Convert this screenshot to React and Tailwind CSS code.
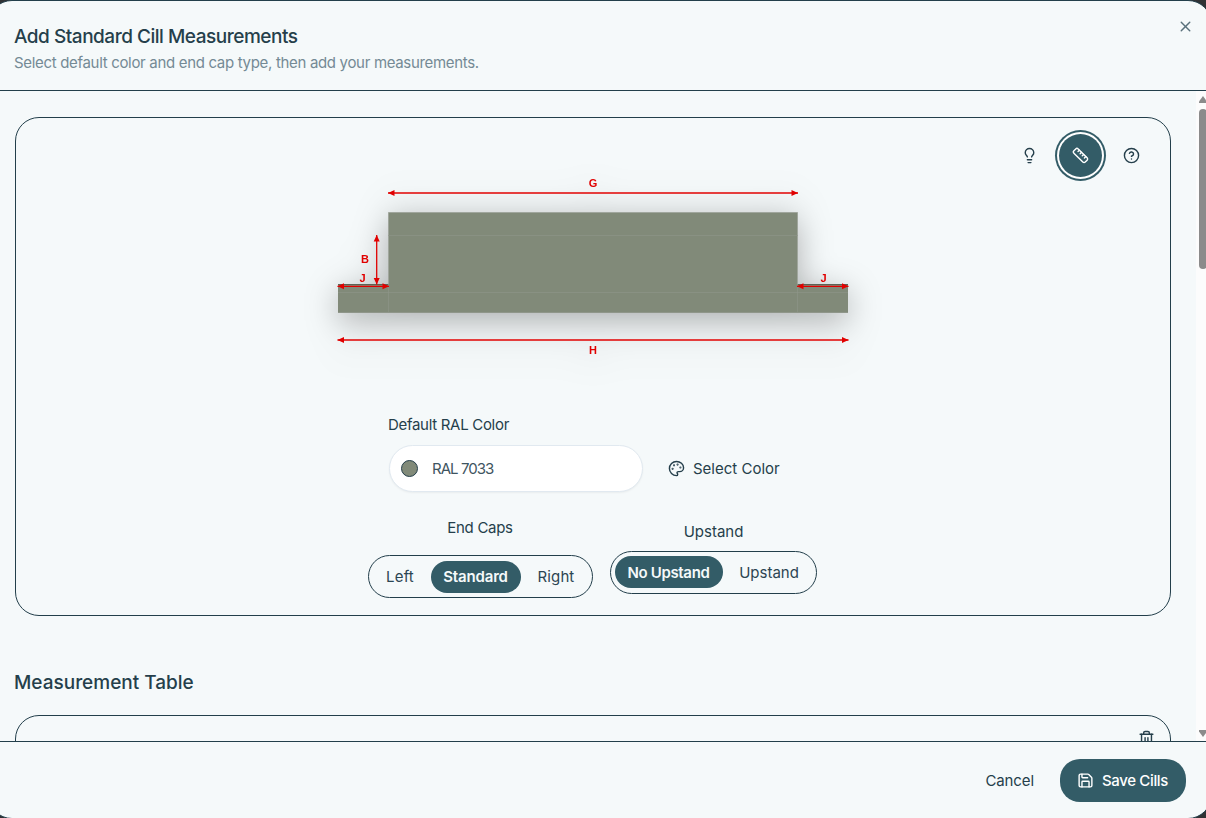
import { useState } from "react";
import { CircleQuestionMark, Lightbulb, Ruler, Save, Trash2, X } from "lucide-react";

const RAL_HEX = "#818a79";

function PaletteIcon({ className }) {
  return (
    <svg
      width="17"
      height="17"
      viewBox="0 0 24 24"
      fill="none"
      stroke="currentColor"
      strokeWidth="2"
      strokeLinecap="round"
      strokeLinejoin="round"
      className={className}
    >
      <circle cx="13.5" cy="6.5" r=".5" fill="currentColor" />
      <circle cx="17.5" cy="10.5" r=".5" fill="currentColor" />
      <circle cx="8.5" cy="7.5" r=".5" fill="currentColor" />
      <circle cx="6.5" cy="12.5" r=".5" fill="currentColor" />
      <path d="M12 2C6.5 2 2 6.5 2 12s4.5 10 10 10c.926 0 1.648-.746 1.648-1.688 0-.437-.18-.835-.437-1.125-.29-.289-.438-.652-.438-1.125a1.64 1.64 0 0 1 1.668-1.668h1.996c3.051 0 5.555-2.503 5.555-5.554C21.965 6.012 17.461 2 12 2z" />
    </svg>
  );
}

// Arrow with a head on both ends, horizontal or vertical
function Dimension({ x1, y1, x2, y2, width = 1.3 }) {
  const vertical = x1 === x2;
  const heads = vertical
    ? `M${x1} ${y1}l-3 6.5h6zM${x2} ${y2}l-3 -6.5h6z`
    : `M${x1} ${y1}l6.5 -3v6zM${x2} ${y2}l-6.5 -3v6z`;

  return (
    <g>
      <line x1={x1} y1={y1} x2={x2} y2={y2} stroke="#e00000" strokeWidth={width} />
      <path d={heads} fill="#e00000" />
    </g>
  );
}

function CillDiagram() {
  return (
    <svg
      width="510"
      height="184"
      viewBox="0 0 510 184"
      className="mx-auto block overflow-visible drop-shadow-[0_8px_16px_rgba(0,0,0,0.3)]"
    >
      <path d="M50.5 35.5H459.5V107H510V136H0V107H50.5Z" fill={RAL_HEX} />
      <g stroke="#8f968a" strokeWidth="1" fill="none">
        <path d="M50.5 107V35.5H459.5V107" stroke="#a0a69d" />
        <path d="M50 58.5H460M0 115.5H510M50.5 107V136M459.5 107V136" strokeOpacity="0.6" />
        <path d="M0 135.5H510" />
      </g>
      <path d="M0 107.5H50M460 107.5H510" stroke="#5c6356" />
      <Dimension x1={50} y1={16} x2={460} y2={16} />
      <Dimension x1={-0.5} y1={163} x2={510.5} y2={163} />
      <Dimension x1={-0.5} y1={109.3} x2={51} y2={109.3} />
      <Dimension x1={459} y1={109.3} x2={510.5} y2={109.3} />
      <Dimension x1={38.7} y1={58} x2={38.7} y2={107.5} />
      <g
        fill="#e00000"
        textAnchor="middle"
        className="font-['Liberation_Sans',sans-serif] text-[11px] font-bold"
      >
        <text x="255" y="10">G</text>
        <text x="27" y="86">B</text>
        <text x="24.5" y="105">J</text>
        <text x="485.5" y="105">J</text>
        <text x="255" y="177">H</text>
      </g>
    </svg>
  );
}

function Segmented({ options, value, onChange, className }) {
  return (
    <div
      className={`flex h-[43px] rounded-full border border-[#233f4b] ${className}`}
    >
      {options.map((option) => (
        <button
          key={option.label}
          onClick={() => onChange(option.label)}
          className={`h-8 rounded-full text-[15px] whitespace-nowrap ${option.className} ${
            value === option.label
              ? "bg-[#335c67] font-semibold text-[#f5f9fa]"
              : "text-[#2c4552]"
          }`}
        >
          {option.label}
        </button>
      ))}
    </div>
  );
}

const endCapOptions = [
  { label: "Left", className: "w-[62px] pt-px pl-px tracking-[0.15px]" },
  { label: "Standard", className: "w-[90px] pt-px tracking-[-0.15px]" },
  { label: "Right", className: "w-[70px] pt-px pl-px tracking-[0.1px]" },
];

const upstandOptions = [
  { label: "No Upstand", className: "w-[108px] pt-[2px] tracking-[-0.35px]" },
  { label: "Upstand", className: "w-[92px] pt-[2px] pl-px tracking-[0px]" },
];

export default function App() {
  const [endCap, setEndCap] = useState("Standard");
  const [upstand, setUpstand] = useState("No Upstand");

  return (
    <div className="h-[818px] w-full overflow-hidden bg-[#303234] font-['Inter',sans-serif] text-[#253f4b]">
      <div className="-ml-3 flex h-[819px] w-[1224px] flex-col overflow-hidden rounded-3xl border border-[#233f4b] bg-[#f5f9fa]">
        <header className="flex h-[90px] shrink-0 items-start justify-between border-b border-[#233f4b] pr-[17px] pl-[25px]">
          <div className="pt-[23px]">
            <h2 className="text-[19px] leading-[26px] font-medium tracking-[-0.48px]">
              Add Standard Cill Measurements
            </h2>
            <p className="text-[15px] leading-[26px] tracking-[-0.32px] text-[#748a95]">
              Select default color and end cap type, then add your measurements.
            </p>
          </div>
          <button className="mt-[17px] text-[#59707b]">
            <X size={17} strokeWidth={2} />
          </button>
        </header>

        <div className="flex min-h-0 flex-1">
          <main className="flex w-[1207px] shrink-0 flex-col overflow-hidden pt-[26px] pr-[25px] pl-[26px]">
            <section className="h-[499px] shrink-0 rounded-3xl border border-[#233f4b]">
              <div className="flex justify-end gap-2 pt-4 pr-[17px]">
                <button className="flex size-[43px] items-center justify-center">
                  <Lightbulb size={17} />
                </button>
                <button className="flex size-[43px] items-center justify-center rounded-full bg-[#335c67] text-white ring-2 ring-[#335c67] ring-offset-2 ring-offset-white">
                  <Ruler size={17} />
                </button>
                <button className="flex size-[43px] items-center justify-center">
                  <CircleQuestionMark size={17} />
                </button>
              </div>

              <CillDiagram />

              <div className="mx-auto mt-[52px] w-[410px]">
                <p className="text-[15px] leading-6 tracking-[-0.3px]">Default RAL Color</p>
                <div className="mt-2 flex items-center">
                  <div className="ml-[1px] flex h-[47px] w-[254px] items-center rounded-full border border-[#e1e9f0] bg-white pl-[11px] shadow-xs">
                    <span
                      className="size-[17px] rounded-full border border-[#253f4b]"
                      style={{ backgroundColor: RAL_HEX }}
                    />
                    <span className="ml-[14px] pt-px text-[15px] tracking-[-0.95px] text-[#3f5561]">
                      RAL 7033
                    </span>
                  </div>
                  <button className="ml-[25px] flex items-center gap-2 text-[15px] whitespace-nowrap">
                    <PaletteIcon className="-mt-px" />
                    <span className="pt-px tracking-[0px]">Select Color</span>
                  </button>
                </div>
              </div>

              <div className="mt-6 flex items-center justify-center gap-[17px] pr-[2px]">
                <div className="text-center">
                  <p className="mb-[15px] text-[15px] leading-6 tracking-[-0.3px]">End Caps</p>
                  <Segmented
                    options={endCapOptions}
                    value={endCap}
                    onChange={setEndCap}
                    className="w-[225px] pt-[5px]"
                  />
                </div>
                <div className="text-center">
                  <p className="mb-[7px] pl-px text-[15px] leading-6">Upstand</p>
                  <Segmented
                    options={upstandOptions}
                    value={upstand}
                    onChange={setUpstand}
                    className="w-[207px] pt-1 pl-1"
                  />
                </div>
              </div>
            </section>

            <h3 className="mt-[53px] -ml-px shrink-0 text-[19px] leading-7 font-medium">
              Measurement Table
            </h3>
            <section className="mt-[18px] flex h-[120px] shrink-0 justify-end rounded-3xl border border-[#233f4b] pt-[14px] pr-[15px]">
              <Trash2 size={17} />
            </section>
          </main>

          {/* scrollbar */}
          <div className="flex w-[15px] shrink-0 flex-col items-center bg-[#fcfcfc] pt-[5px] pb-1 pr-[1px]">
            <svg width="8" height="7" viewBox="0 0 8 7" fill="#8b8b8b">
              <path d="M4 0L8 5.5V7H0V5.5Z" />
            </svg>
            <div className="mt-[6px] h-[160px] w-2 rounded-full bg-[#8b8b8b]" />
            <svg className="mt-auto" width="8" height="7" viewBox="0 0 8 7" fill="#8b8b8b">
              <path d="M4 7L8 1.5V0H0V1.5Z" />
            </svg>
          </div>
        </div>

        <footer className="flex h-[77px] shrink-0 items-start justify-end border-t border-[#233f4b] pt-[17px] pr-[25px]">
          <button className="mr-[26px] h-[43px] pt-px text-[15px] tracking-[-0.1px]">Cancel</button>
          <button className="flex h-[43px] w-[126px] items-center justify-center gap-2 rounded-[20px] bg-[#335c67] pr-px text-[15px] font-medium tracking-[-0.35px] whitespace-nowrap text-white">
            <Save size={17} />
            <span className="pt-px">Save Cills</span>
          </button>
        </footer>
      </div>
    </div>
  );
}
